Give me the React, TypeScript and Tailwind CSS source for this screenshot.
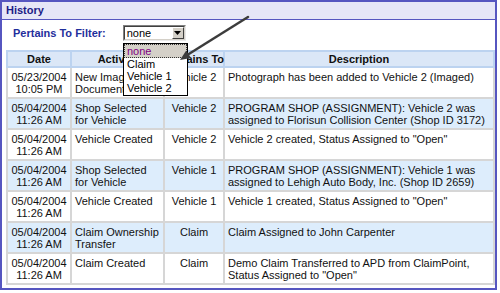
import React from 'react';

type Row = { date: string; time: string; activity: string; pertains: string; desc: string };

const rows: Row[] = [
    { date: '05/23/2004', time: '10:05 PM', activity: 'New Image Document', pertains: 'Vehicle 2', desc: 'Photograph has been added to Vehicle 2 (Imaged)' },
    { date: '05/04/2004', time: '11:26 AM', activity: 'Shop Selected for Vehicle', pertains: 'Vehicle 2', desc: 'PROGRAM SHOP (ASSIGNMENT): Vehicle 2 was assigned to Florisun Collision Center (Shop ID 3172)' },
    { date: '05/04/2004', time: '11:26 AM', activity: 'Vehicle Created', pertains: 'Vehicle 2', desc: 'Vehicle 2 created, Status Assigned to "Open"' },
    { date: '05/04/2004', time: '11:26 AM', activity: 'Shop Selected for Vehicle', pertains: 'Vehicle 1', desc: 'PROGRAM SHOP (ASSIGNMENT): Vehicle 1 was assigned to Lehigh Auto Body, Inc. (Shop ID 2659)' },
    { date: '05/04/2004', time: '11:26 AM', activity: 'Vehicle Created', pertains: 'Vehicle 1', desc: 'Vehicle 1 created, Status Assigned to "Open"' },
    { date: '05/04/2004', time: '11:26 AM', activity: 'Claim Ownership Transfer', pertains: 'Claim', desc: 'Claim Assigned to John Carpenter' },
    { date: '05/04/2004', time: '11:26 AM', activity: 'Claim Created', pertains: 'Claim', desc: 'Demo Claim Transferred to APD from ClaimPoint, Status Assigned to "Open"' },
];

const FilterSelect = () => (
    <div className="flex h-[16px] w-[63px] border border-t-[#808080] border-l-[#808080] border-b-[#e8e8e8] border-r-[#e8e8e8]">
        <div className="flex flex-1 border border-t-[#404040] border-l-[#404040] border-b-[#d4d0c8] border-r-[#d4d0c8] bg-white">
            <span className="flex-1 pl-[2px] text-[11px] leading-[12px] text-black">none</span>
            <div className="flex w-[12px] items-center justify-center border border-t-white border-l-white border-b-[#404040] border-r-[#404040] bg-[#d4d0c8]">
                <svg width="7" height="4" viewBox="0 0 7 4">
                    <polygon points="0,0 7,0 3.5,4" fill="black" />
                </svg>
            </div>
        </div>
    </div>
);

export default function App() {
    return (
        <div className="relative h-[293px] w-[500px] bg-white font-['Liberation_Sans',Arial,sans-serif]">
            <div className="h-[290px] w-[497px] border-2 border-[#5656c0]">
                {/* Title bar */}
                <div className="flex h-[18px] items-center border-b border-[#5656c0] bg-[#e6e6f7] pl-[4px] text-[11px] font-bold text-[#1c1c86]">
                    History
                </div>

                {/* Filter */}
                <div className="flex items-center gap-[17px] pl-[11px] pt-[5px]">
                    <span className="text-[11px] font-bold text-[#1f2f9c]">Pertains To Filter:</span>
                    <FilterSelect />
                </div>

                {/* History table */}
                <table className="ml-[4px] mt-[8px] w-[487px] table-fixed border-collapse text-[11px] leading-[12px] text-[#111]">
                    <colgroup>
                        <col className="w-[64px]" />
                        <col className="w-[93px]" />
                        <col className="w-[60px]" />
                        <col className="w-[270px]" />
                    </colgroup>
                    <thead>
                        <tr className="h-[16px] bg-[#dbe7f7] font-bold">
                            <th className="border-2 border-[#bcd3f0] text-center">Date</th>
                            <th className="border-2 border-[#bcd3f0] text-center">Activity</th>
                            <th className="whitespace-nowrap border-2 border-[#bcd3f0] text-center">Pertains To</th>
                            <th className="border-2 border-[#bcd3f0] text-center">Description</th>
                        </tr>
                    </thead>
                    <tbody>
                        {rows.map((r, i) => (
                            <tr key={i} className={i % 2 === 1 ? 'bg-[#ddedfc]' : 'bg-white'}>
                                <td className="border-2 border-[#d6d6d6] px-[2px] pb-[2px] pt-[3px] align-top text-center">
                                    {r.date}
                                    <br />
                                    {r.time}
                                </td>
                                <td className="border-2 border-[#d6d6d6] px-[3px] pb-[2px] pt-[3px] align-top">{r.activity}</td>
                                <td className="border-2 border-[#d6d6d6] px-[2px] pb-[2px] pt-[3px] align-top text-center">{r.pertains}</td>
                                <td className="border-2 border-[#d6d6d6] px-[3px] pb-[2px] pt-[3px] align-top">{r.desc}</td>
                            </tr>
                        ))}
                    </tbody>
                </table>
            </div>

            {/* Open dropdown list */}
            <div className="absolute left-[123px] top-[43px] w-[65px] border border-black bg-white text-[11px] leading-[12px] text-black">
                <div className="border border-dotted border-[#333] bg-[#d4d0c8] pl-[2px] text-[#800080]">none</div>
                <div className="pl-[3px]">Claim</div>
                <div className="pl-[3px]">Vehicle 1</div>
                <div className="pl-[3px] pb-[1px]">Vehicle 2</div>
            </div>

            {/* Pointer arrow */}
            <svg className="absolute left-0 top-0" width="500" height="293" viewBox="0 0 500 293">
                <line x1="248" y1="17" x2="188" y2="54.5" stroke="#3c3c3c" strokeWidth="2.5" strokeLinecap="round" />
                <polygon points="180,60 186.2,50.6 191,58" fill="#3c3c3c" />
            </svg>
        </div>
    );
}
